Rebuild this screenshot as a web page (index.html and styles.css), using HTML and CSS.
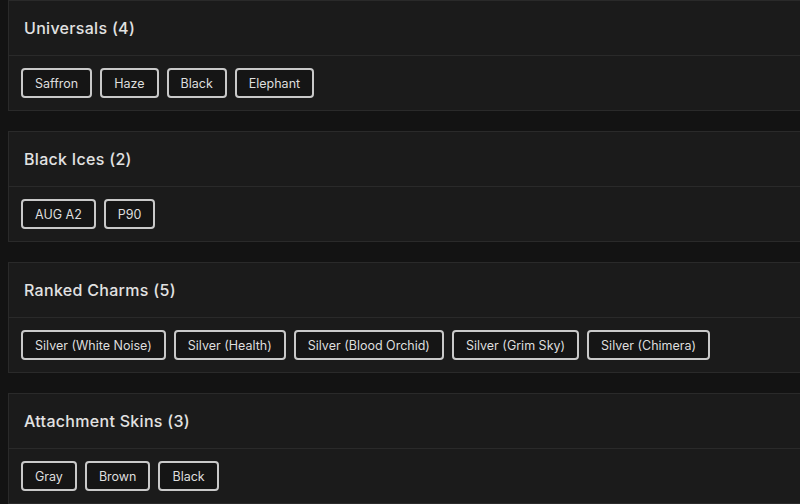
FILE: index.html
```html
<!DOCTYPE html>
<html>
<head>
<meta charset="utf-8">
<link rel="stylesheet" href="styles.css">
</head>
<body>
<div class="list">
  <section class="card">
    <div class="card-head">Universals (4)</div>
    <div class="card-body">
      <span class="tag">Saffron</span>
      <span class="tag">Haze</span>
      <span class="tag">Black</span>
      <span class="tag">Elephant</span>
    </div>
  </section>
  <section class="card">
    <div class="card-head">Black Ices (2)</div>
    <div class="card-body">
      <span class="tag">AUG A2</span>
      <span class="tag">P90</span>
    </div>
  </section>
  <section class="card">
    <div class="card-head">Ranked Charms (5)</div>
    <div class="card-body">
      <span class="tag">Silver (White Noise)</span>
      <span class="tag">Silver (Health)</span>
      <span class="tag">Silver (Blood Orchid)</span>
      <span class="tag">Silver (Grim Sky)</span>
      <span class="tag">Silver (Chimera)</span>
    </div>
  </section>
  <section class="card">
    <div class="card-head">Attachment Skins (3)</div>
    <div class="card-body">
      <span class="tag">Gray</span>
      <span class="tag">Brown</span>
      <span class="tag">Black</span>
    </div>
  </section>
</div>
</body>
</html>
```
FILE: styles.css
```css
html, body {
  margin: 0;
  padding: 0;
  background: #131313;
  overflow: hidden;
  font-family: Inter, "Open Sans", "Liberation Sans", sans-serif;
}
.list {
  display: flex;
  flex-direction: column;
  gap: 20px;
  padding-left: 8px;
  margin-right: -20px;
}
.card {
  background: #1b1b1b;
  border: 1px solid #2a2a2a;
}
.card-head {
  height: 54px;
  display: flex;
  align-items: center;
  padding-left: 15px;
  font-size: 16px;
  font-weight: 500;
  letter-spacing: 0.3px;
  color: #e2e2e2;
  border-bottom: 1px solid #2a2a2a;
}
.card-body {
  display: flex;
  gap: 8px;
  padding: 12px 12px;
}
.tag {
  box-sizing: border-box;
  height: 30px;
  display: inline-flex;
  align-items: center;
  padding: 0 12px;
  border: 2px solid #c9c9c9;
  border-radius: 4px;
  background: #151515;
  color: #dedede;
  font-size: 12.5px;
}
```
